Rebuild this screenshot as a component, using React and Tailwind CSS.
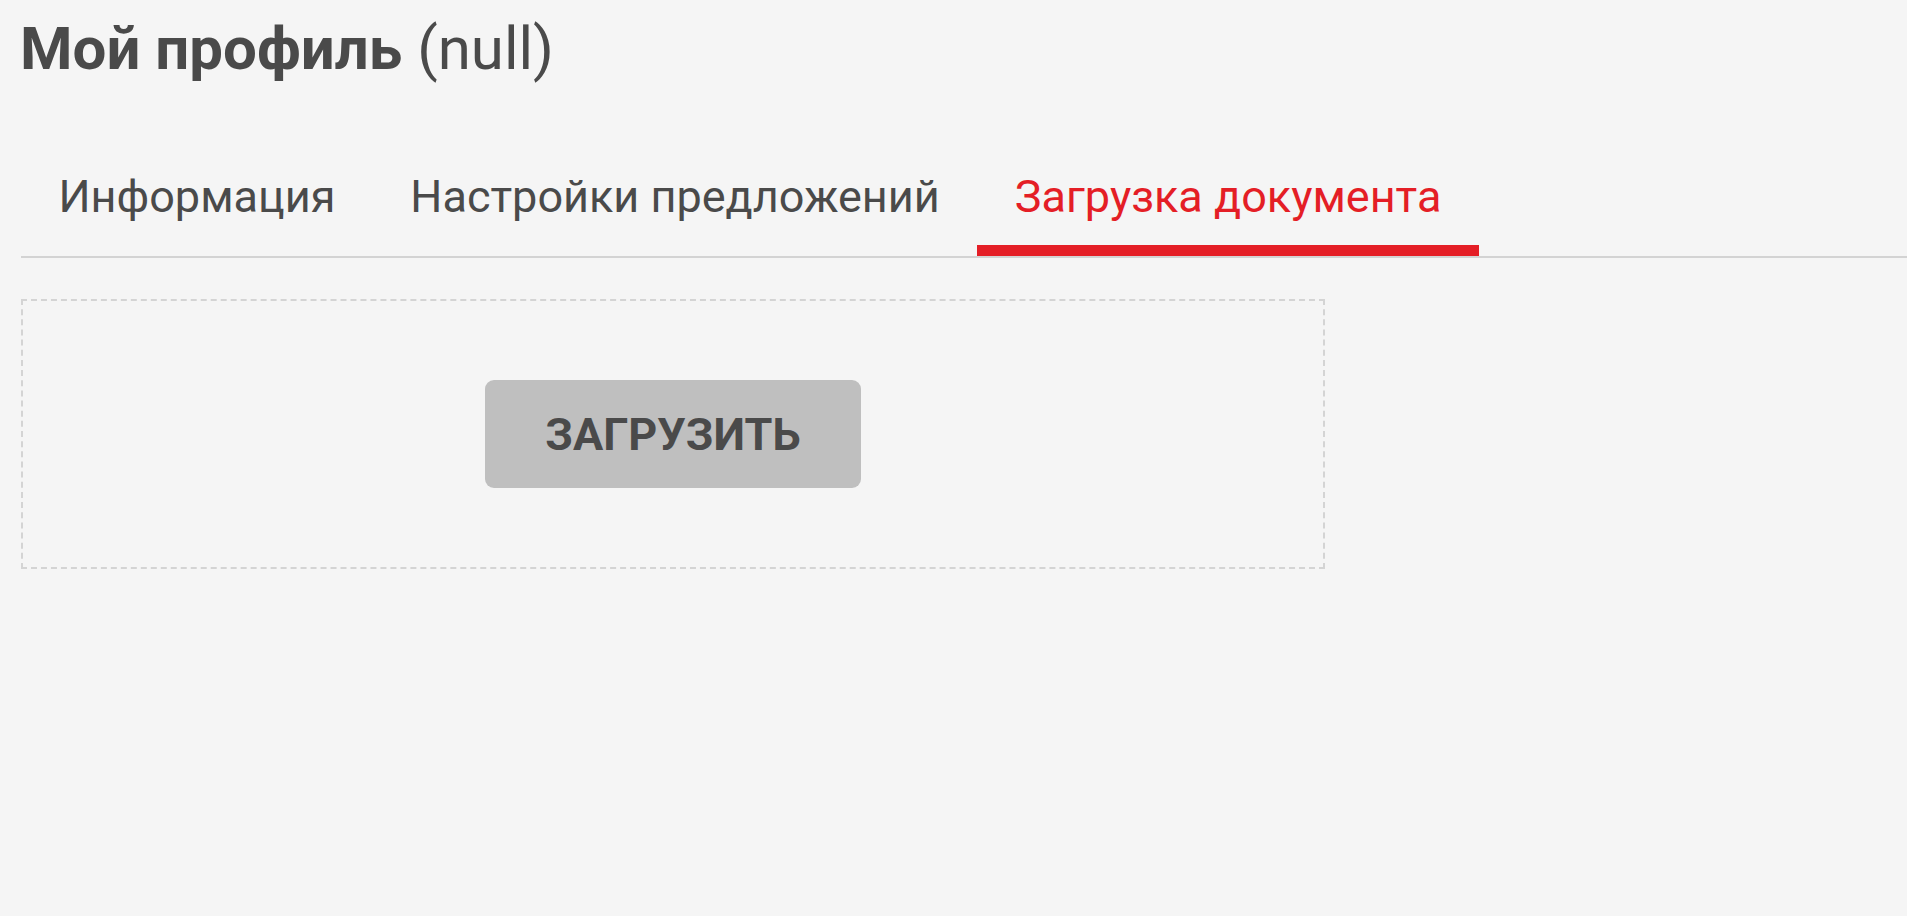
import React from "react";

export default function App() {
  const tabs = ["Информация", "Настройки предложений", "Загрузка документа"];
  const active = 2;
  return (
    <div className="min-h-screen w-full bg-[#f5f5f5] text-[#4a4a4a] pl-[21px]" style={{ fontFamily: "Roboto, 'Noto Sans', sans-serif" }}>
      <h1 className="pt-[14px] text-[60px] leading-[70px] m-0 -ml-[1px]">
        <span className="font-bold">Мой профиль</span>
        <span className="font-normal"> (null)</span>
      </h1>
      <div className="mt-[63px] flex border-b-2 border-[#d3d3d3]">
        {tabs.map((t, i) => (
          <div
            key={t}
            className={
              i === active
                ? "px-[37.5px] pt-[23px] pb-[22px] text-[45px] leading-[53px] text-[#e41e26] border-b-[11px] border-[#e41e26]"
                : "px-[37.5px] pt-[23px] pb-[33px] text-[45px] leading-[53px] text-[#4a4a4a]"
            }
          >
            {t}
          </div>
        ))}
      </div>
      <div className="mt-[41px] w-[1304px] h-[270px] border-2 border-dashed border-[#d4d4d4] flex items-center justify-center">
        <button className="h-[108px] px-[60px] rounded-[9px] bg-[#bfbfbf] text-[#4a4a4a] font-bold text-[45px] leading-none">
          ЗАГРУЗИТЬ
        </button>
      </div>
    </div>
  );
}
